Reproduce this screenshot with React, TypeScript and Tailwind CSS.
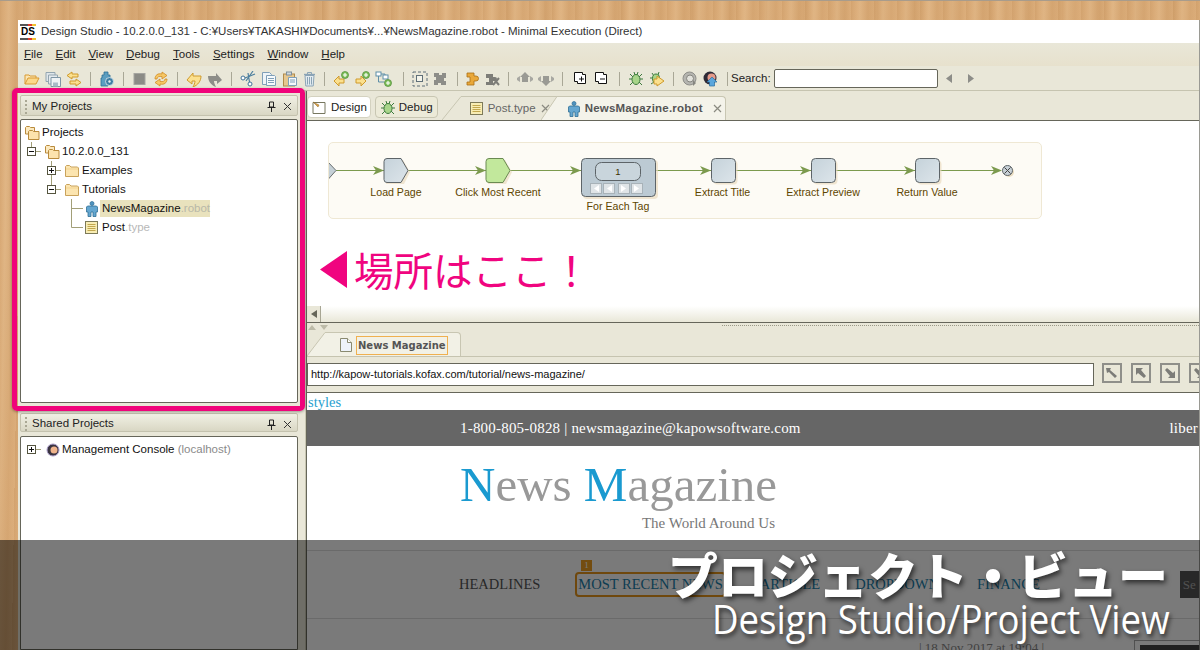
import type { ReactNode } from 'react'

// ── Toolbar + tree icons, all on a 16x16 grid ──
const Ico = ({ children, w = 16 }: { children: ReactNode; w?: number }) => (
  <svg width={w} height="16" viewBox={`0 0 ${w} 16`} className="shrink-0 block">
    {children}
  </svg>
)

const Plus = () => (
  <g>
    <circle cx="12" cy="4" r="3.5" fill="#7fbf5a" stroke="#4c8a36" strokeWidth=".7" />
    <path d="M12 2v4M10 4h4" stroke="#fff" strokeWidth="1.1" />
  </g>
)

const FolderOpen = () => (
  <Ico>
    <path d="M1 13V4h4l1 1h6v2" fill="#fbe6b4" stroke="#d99a32" />
    <path d="M1 13l3-6h11l-3 6z" fill="#fcd98a" stroke="#d99a32" />
  </Ico>
)
const SaveAll = () => (
  <Ico>
    <path d="M1 1.5h9v9H1z" fill="#dfe6ea" stroke="#93a5b0" />
    <path d="M3.5 4h9v9h-9z" fill="#e4eaee" stroke="#93a5b0" />
    <path d="M6 6.5h9.5v9H6z" fill="#eef2f4" stroke="#7f96a5" />
    <path d="M8 11.5h5v4H8z" fill="#a8bac6" />
  </Ico>
)
const Swap = () => (
  <Ico>
    <path d="M6 1L1 4.5 6 8V6h6V3H6z" fill="#fbe08e" stroke="#cf9a2c" />
    <path d="M10 8l5 3.5-5 3.5v-2H4v-3h6z" fill="#fbe08e" stroke="#cf9a2c" />
  </Ico>
)
const RobotGear = () => (
  <Ico>
    <path d="M5 1h4v3h2v3H9v8H2V7h1V4h2z" fill="#5b9dc0" stroke="#2f6f96" strokeWidth=".8" />
    <circle cx="10.5" cy="10.5" r="4" fill="#3f7ea3" stroke="#dfeaf0" strokeWidth=".8" />
    <circle cx="10.5" cy="10.5" r="1.2" fill="#e8f0f4" />
  </Ico>
)
const Stop = () => (
  <Ico>
    <rect x="2" y="2.5" width="11" height="11" fill="#8b8b86" stroke="#a5a5a0" />
  </Ico>
)
const Refresh = () => (
  <Ico>
    <path d="M2 8c0-4 3-6 7-5V1l5 3.5L9 8V5.5C6 5 4 6 4 8z" fill="#f6c765" stroke="#d08a24" strokeWidth=".8" />
    <path d="M14 8c0 4-3 6-7 5v2L2 11.5 7 8v2.5c3 .5 5-.5 5-2.5z" fill="#f6c765" stroke="#d08a24" strokeWidth=".8" />
  </Ico>
)
const Undo = () => (
  <Ico>
    <path d="M1 9l6-7v3h8c0 5-3 9-8 11 1-2 2-4 2-6H6v3z" fill="#fbe08e" stroke="#cf9a2c" />
  </Ico>
)
const Redo = () => (
  <Ico>
    <path d="M15 9L9 2v3H1c0 5 3 9 8 11-1-2-2-4-2-6h3v3z" fill="#8d8d88" />
  </Ico>
)
const Scissors = () => (
  <Ico>
    <path d="M13 0L6 10M8 2l2 12" stroke="#4d7f9e" strokeWidth="1.2" fill="none" />
    <path d="M15 3L5 7" stroke="#4d7f9e" strokeWidth="1.2" />
    <circle cx="3" cy="7" r="2" fill="#fff" stroke="#3f7299" />
    <circle cx="10" cy="13" r="2" fill="#fff" stroke="#3f7299" />
  </Ico>
)
const Copy = () => (
  <Ico>
    <path d="M1.5 1.5h7l2 2v10h-9z" fill="#eef4f8" stroke="#7f9fb8" />
    <path d="M5.5 4.5h8l1 1v9h-9z" fill="#f6fafc" stroke="#7f9fb8" />
    <path d="M7 7.5h6M7 9.5h6M7 11.5h6" stroke="#7f9fb8" />
  </Ico>
)
const Paste = () => (
  <Ico>
    <rect x="1.5" y="3" width="11" height="12" fill="#e6c78e" stroke="#b08a4a" />
    <rect x="4.5" y="1" width="5" height="3" fill="#cfd8de" stroke="#7f8f9a" />
    <path d="M6.5 6.5h8v8h-8z" fill="#f4f8fb" stroke="#7f9fb8" />
    <path d="M8 9h5M8 11h5" stroke="#7f9fb8" />
  </Ico>
)
const Trash = () => (
  <Ico w={13}>
    <path d="M1 3.5h11" stroke="#8ba4b6" strokeWidth="1.4" />
    <path d="M4.5 3V1.5h4V3" stroke="#8ba4b6" fill="none" />
    <path d="M2 4.5h9l-.8 10.5H2.8z" fill="#e3ebf0" stroke="#8ba4b6" />
    <path d="M4.5 6v7.5M6.5 6v7.5M8.5 6v7.5" stroke="#8ba4b6" />
  </Ico>
)
const ArrowLeftPlus = () => (
  <Ico>
    <path d="M1 10l5-5v3h5v4H6v3z" fill="#fbe08e" stroke="#cf9a2c" />
    <Plus />
  </Ico>
)
const ArrowRightPlus = () => (
  <Ico>
    <path d="M12 10L7 5v3H2v4h5v3z" fill="#fbe08e" stroke="#cf9a2c" />
    <Plus />
  </Ico>
)
const NodesPlus = () => (
  <Ico w={20}>
    <rect x="1" y="1" width="5" height="4" fill="#fff" stroke="#5f8fa8" />
    <rect x="8" y="4" width="5" height="4" fill="#fff" stroke="#5f8fa8" />
    <path d="M3.5 5v6h6M6 3h4v1" stroke="#5f8fa8" fill="none" />
    <circle cx="13" cy="12" r="3.5" fill="#7fbf5a" stroke="#4c8a36" strokeWidth=".7" />
    <path d="M13 10v4M11 12h4" stroke="#fff" strokeWidth="1.1" />
  </Ico>
)
const Frame = () => (
  <Ico>
    <path d="M1 1h14v14H1z" fill="none" stroke="#5f6f78" strokeDasharray="3 2" />
    <rect x="4.5" y="4.5" width="6" height="6" fill="#f4f4ea" stroke="#5f6f78" />
  </Ico>
)
const GreyPuzzle = () => (
  <Ico>
    <path d="M1 2h5v2h3V2h4v5h-2v3h2v4H8v-2H5v2H1v-5h2V6H1z" fill="#8d8d88" />
  </Ico>
)
const OrangePuzzle = () => (
  <Ico w={14}>
    <path d="M1 2h7v3h2a2.5 2.5 0 1 1 0 5H8v4H1v-3h3V6H1z" fill="#e9a83a" stroke="#a96e14" strokeWidth=".8" />
  </Ico>
)
const GreyPuzzleX = () => (
  <Ico w={15}>
    <path d="M1 3h7v3h2a2 2 0 1 1 0 4H8v4H1v-3h3V7H1z" fill="#7d7d78" />
    <path d="M8 7l6 7M14 7l-6 7" stroke="#7d7d78" strokeWidth="2" />
  </Ico>
)
const GreyUp = () => (
  <Ico>
    <path d="M8 1l5 5h-2v5H5V6H3z" fill="#9a9a94" />
    <path d="M0 7l3-2v6L0 9zM16 7l-3-2v6l3-2z" fill="#a8a8a2" />
  </Ico>
)
const GreyDown = () => (
  <Ico>
    <path d="M8 15l5-5h-2V5H5v5H3z" fill="#9a9a94" />
    <path d="M0 7l3-2v6L0 9zM16 7l-3-2v6l3-2z" fill="#a8a8a2" />
  </Ico>
)
const SquarePlus = () => (
  <Ico w={19}>
    <g transform="translate(3 0)">
      <path d="M.5 1.5h8v2h3v9h-8v-2h-3z" fill="#fff" stroke="#111" />
      <path d="M7.5 5.5v5M5 8h5" stroke="#111" />
    </g>
  </Ico>
)
const SquareMinus = () => (
  <Ico>
    <path d="M.5 1.5h8v2h3v9h-8v-2h-3z" fill="#fff" stroke="#111" />
    <path d="M5 8h5" stroke="#111" />
  </Ico>
)
const Bug = () => (
  <Ico>
    <path d="M2 3l3 3M14 3l-3 3M1 8h3M15 8h-3M2 14l3-3M14 14l-3-3M6 1l1 3M10 1L9 4" stroke="#3c7a3c" />
    <ellipse cx="8" cy="8.5" rx="4" ry="5" fill="#a8d58a" stroke="#3c7a3c" />
  </Ico>
)
const BugArrow = () => (
  <Ico>
    <path d="M3 2l2 3M10 1L9 4M1 7h3M2 13l3-2" stroke="#3c7a3c" />
    <ellipse cx="7" cy="7.5" rx="3.5" ry="4.5" fill="#a8d58a" stroke="#3c7a3c" />
    <path d="M8 5l7 5-7 5v-2H5V8h3z" fill="#fbe08e" stroke="#cf9a2c" />
  </Ico>
)
const GreyGlobe = () => (
  <Ico>
    <circle cx="7.5" cy="7.5" r="6.5" fill="#b5b5b0" stroke="#8d8d88" />
    <circle cx="8" cy="7.5" r="3.5" fill="#e2e2dc" stroke="#85857f" />
    <path d="M11 9l3 3-3 3z" fill="#85857f" />
  </Ico>
)
const Console = () => (
  <Ico>
    <circle cx="7" cy="7" r="6.5" fill="#2e2a36" />
    <circle cx="8.5" cy="6.5" r="4" fill="#e59a8a" />
    <path d="M9 6l5 5h-2.5v4h-5v-4H4z" fill="#5aa6dc" stroke="#2c6f9f" strokeWidth=".7" />
  </Ico>
)

const TOOLS: (ReactNode | null)[] = [
  <FolderOpen />, <SaveAll />, <Swap />, null,
  <RobotGear />, null,
  <Stop />, <Refresh />, null,
  <Undo />, <Redo />, null,
  <Scissors />, <Copy />, <Paste />, <Trash />, null,
  <ArrowLeftPlus />, <ArrowRightPlus />, <NodesPlus />, null,
  <Frame />, <GreyPuzzle />, null,
  <OrangePuzzle />, <GreyPuzzleX />, null,
  <GreyUp />, <GreyDown />, null,
  <SquarePlus />, <SquareMinus />, null,
  <Bug />, <BugArrow />, null,
  <GreyGlobe />, <Console />, null,
]

const Sep = () => <span className="mx-[3px] h-[14px] w-[1px] shrink-0 bg-[#a9a796]" />

const FolderIcon = () => (
  <Ico>
    <path d="M1.5 13.5v-10l1-1h3L7 4h6.5l1 1v8.5z" fill="#fce5b0" stroke="#c9a25a" />
    <path d="M2 6h12" stroke="#f3d38f" />
  </Ico>
)
const FoldersIcon = () => (
  <Ico>
    <path d="M1.5 9V2.5l1-1h3l1 1h4V9z" fill="#fce9bf" stroke="#b98b3c" />
    <path d="M4.5 14.5v-8l1-1h3l1 1H15v8z" fill="#fce3ad" stroke="#b98b3c" />
  </Ico>
)
const PersonIcon = () => (
  <svg width="14" height="16" viewBox="0 0 14 16" className="shrink-0 block">
    <circle cx="7" cy="2.5" r="2" fill="#4f93bf" stroke="#2f6f96" strokeWidth=".7" />
    <path d="M2.5 5h9l1 1v5H11v4.5H8V11H6v4.5H3V11H1.5V6z" fill="#64a6d0" stroke="#2f6f96" strokeWidth=".8" />
  </svg>
)
const NoteIcon = () => (
  <Ico w={13}>
    <rect x=".5" y="1.5" width="12" height="12" fill="#f8edb4" stroke="#7d7a58" />
    <path d="M2.5 4.5h8M2.5 6.5h8M2.5 8.5h8M2.5 10.5h8" stroke="#c2a74e" />
  </Ico>
)
const PageIcon = () => (
  <Ico w={12}>
    <path d="M.5 1.5h7l4 4v9h-11z" fill="#eef3fa" stroke="#8a8a70" />
    <path d="M7.5 1.5v4h4" fill="#fff" stroke="#8a8a70" />
  </Ico>
)
const PinClose = () => (
  <div className="ml-auto flex items-center gap-[7px] pr-[5px]">
    <svg width="9" height="11" viewBox="0 0 9 11">
      <path d="M2.5 1h4v5h-4zM.5 6.5h8M4.5 7v4" fill="none" stroke="#222" />
    </svg>
    <svg width="9" height="9" viewBox="0 0 9 9">
      <path d="M1 1l7 7M8 1L1 8" stroke="#333" />
    </svg>
  </div>
)
const TabClose = () => (
  <svg width="9" height="9" viewBox="0 0 9 9" className="shrink-0">
    <path d="M1 1l7 7M8 1L1 8" stroke="#8a8a80" strokeWidth="1.2" />
  </svg>
)

const PanelHeader = ({ title, className }: { title: string; className: string }) => (
  <div
    className={`flex items-center rounded-[2px] border border-[#c4c2ae] bg-gradient-to-b from-[#f1f0e4] to-[#d9d7c4] pl-[4px] ${className}`}
  >
    <span className="mr-[5px] h-[14px] w-[2px] border-l-2 border-dotted border-[#aaa894]" />
    <span className="text-[#222]">{title}</span>
    <PinClose />
  </div>
)

// tree guide lines are drawn per row; w is the indent up to the icon
const Guide = ({ w, d, box }: { w: number; d: string; box?: { x: number; plus: boolean } }) => (
  <svg width={w} height="19" viewBox={`0 0 ${w} 19`} className="shrink-0 block">
    <path d={d} stroke="#a29f78" fill="none" />
    {box && (
      <g>
        <rect x={box.x + 0.5} y="5.5" width="8" height="8" fill="#fff" stroke="#55553f" />
        <path
          d={
            box.plus
              ? `M${box.x + 2} 9.5h5M${box.x + 4.5} 7v5`
              : `M${box.x + 2} 9.5h5`
          }
          stroke="#111"
        />
      </g>
    )}
  </svg>
)

const Row = ({ children }: { children: ReactNode }) => (
  <div className="flex h-[19px] items-center whitespace-nowrap text-[#111]">{children}</div>
)

const Diagram = () => (
  <svg viewBox="329 143 712 75" preserveAspectRatio="none" className="block h-full w-full">
    <defs>
      <linearGradient id="node" x1="0" y1="0" x2="1" y2="1">
        <stop offset="0" stopColor="#c5d2da" />
        <stop offset="1" stopColor="#dde5ea" />
      </linearGradient>
    </defs>
    <path d="M336 170.5H1001" stroke="#7c9a4e" strokeWidth="1.2" />
    {[373, 475, 570, 700, 800, 904, 991].map((x) => (
      <path key={x} d={`M${x} 166l11 4.5-11 4.5 3-4.5z`} fill="#7c9a4e" />
    ))}
    <path d="M328 162l8 8.5-8 9z" fill="#c5d0d6" stroke="#6a6f70" />
    {/* pentagons */}
    <path d="M386 160h17l7 12-6 12h-18z" fill="#e9dcc0" opacity=".7" />
    <path d="M387 158.5h14l7 12-7 12h-14q-3 0-3-3v-18q0-3 3-3z" fill="url(#node)" stroke="#5d6468" />
    <path d="M488 160h17l7 12-6 12h-18z" fill="#e9dcc0" opacity=".7" />
    <path d="M489 158.5h14l7 12-7 12h-14q-3 0-3-3v-18q0-3 3-3z" fill="#c2e89c" stroke="#6b8a52" />
    {/* loop step */}
    <rect x="583" y="160" width="75" height="39" rx="4" fill="#e9dcc0" opacity=".7" />
    <rect x="581.5" y="158.5" width="74" height="38" rx="4" fill="#bccad3" stroke="#5d6468" />
    <rect x="595.5" y="162.5" width="45" height="18" rx="6" fill="#c9d5dc" stroke="#5d6468" />
    <text x="618" y="175" textAnchor="middle" fontSize="9.5" fill="#3d3000">1</text>
    {[591, 604, 619, 632].map((x, i) => (
      <g key={x}>
        <rect x={x - 0.5} y="183.5" width="11" height="10" fill="#dfe4e7" stroke="#a8b2b8" />
        <path
          d={
            i < 2
              ? `M${x + 8} 185v7l-5-3.5z`
              : `M${x + 2} 185v7l5-3.5z`
          }
          fill="#fff"
        />
      </g>
    ))}
    {/* square steps */}
    {[711.5, 811.5, 915.5].map((x) => (
      <g key={x}>
        <rect x={x + 2} y="160.5" width="24" height="24" rx="4" fill="#e9dcc0" opacity=".7" />
        <rect x={x} y="158.5" width="24" height="24" rx="4" fill="url(#node)" stroke="#5d6468" />
      </g>
    ))}
    <circle cx="1009" cy="172" r="5" fill="#e9dcc0" />
    <circle cx="1007.5" cy="170.5" r="5" fill="#c7d0d6" stroke="#5d6468" />
    <path d="M1004.5 167.5l6 6M1010.5 167.5l-6 6" stroke="#444" />
    <g fontSize="10.6" fill="#5e4500" textAnchor="middle">
      <text x="396" y="196">Load Page</text>
      <text x="498" y="196">Click Most Recent</text>
      <text x="618" y="210">For Each Tag</text>
      <text x="722.5" y="196">Extract Title</text>
      <text x="823" y="196">Extract Preview</text>
      <text x="927" y="196">Return Value</text>
    </g>
  </svg>
)

const NavButton = ({ d }: { d: string }) => (
  <span className="flex h-[20px] w-[20px] shrink-0 items-center justify-center border-2 border-[#8f8f8a]">
    <svg width="14" height="14" viewBox="0 0 14 14">
      <path d={d} fill="#7c7c78" />
    </svg>
  </span>
)

export default function App() {
  return (
    <div className="relative flex h-[650px] w-[1200px] flex-col overflow-hidden border-t border-[#a89c8c] bg-[#dcae7b] bg-[repeating-linear-gradient(91deg,rgba(150,90,30,0.12)_0px,rgba(150,90,30,0)_5px,rgba(255,235,200,0.12)_9px,rgba(150,90,30,0.08)_17px,rgba(150,90,30,0)_23px),repeating-linear-gradient(89deg,rgba(140,80,20,0.08)_0px,rgba(140,80,20,0)_13px,rgba(140,80,20,0.05)_37px)] pl-[18px] pt-[19px] font-['Liberation_Sans',sans-serif] text-[11.5px]">
      <div className="flex min-h-0 flex-1 flex-col border-r border-[#9a9a94] bg-[#e9e7d8]">
        {/* Title bar */}
        <div className="flex h-[23px] shrink-0 items-center gap-[5px] bg-white pl-[2px] text-[11.5px] text-[#333]">
          <span className="flex h-[16px] w-[16px] flex-col justify-between bg-white">
            <span className="h-[2px] w-full bg-[linear-gradient(90deg,#555_50%,#e0392b_50%,#e0392b_75%,#f1c232_75%)]" />
            <span className="text-center text-[10px] font-bold leading-[10px] text-black">DS</span>
            <span className="h-[2px] w-full bg-[linear-gradient(90deg,#555_50%,#e0392b_50%,#e0392b_75%,#f1c232_75%)]" />
          </span>
          <span className="whitespace-nowrap">
            Design Studio - 10.2.0.0_131 - C:¥Users¥TAKASHI¥Documents¥...¥NewsMagazine.robot - Minimal Execution (Direct)
          </span>
        </div>

        {/* Menu */}
        <div className="flex h-[23px] shrink-0 items-center gap-[13px] bg-gradient-to-b from-[#e9e7d8] to-[#e7e1cd] pl-[6px] text-[#222]">
          {['File', 'Edit', 'View', 'Debug', 'Tools', 'Settings', 'Window', 'Help'].map((m) => (
            <span key={m}>
              <span className="underline">{m[0]}</span>
              {m.slice(1)}
            </span>
          ))}
        </div>

        {/* Toolbar */}
        <div className="flex h-[25px] shrink-0 items-center gap-[5px] border-b border-[#c6c4b0] pl-[6px] pt-[1px]">
          {TOOLS.map((t, i) => (t ? <span key={i}>{t}</span> : <Sep key={i} />))}
          <span className="-ml-[5px] text-[#222]">Search:</span>
          <span className="-ml-[2px] h-[19px] w-[164px] rounded-[2px] border border-[#66665a] bg-white" />
          <svg width="30" height="9" viewBox="0 0 30 9" className="ml-[3px]">
            <path d="M6 0v9L0 4.5zM22 0v9l6-4.5z" fill="#8d8d88" />
          </svg>
        </div>

        <div className="flex min-h-0 flex-1">
          {/* Left column: project views */}
          <div className="flex w-[288px] shrink-0 flex-col border-r border-[#c8c6b2] pl-[2px] pr-[7px] pt-[4px]">
            <PanelHeader title="My Projects" className="h-[21px] shrink-0 pt-[2px]" />
            <div className="mt-[3px] h-[284px] shrink-0 rounded-[2px] border border-[#66665a] bg-white pt-[3px]">
              <Row>
                <span className="w-[3px]" />
                <FoldersIcon />
                <span className="ml-[2px]">Projects</span>
              </Row>
              <Row>
                <Guide w={23} d="M10.5 0v5M14 9.5h6" box={{ x: 6, plus: false }} />
                <FoldersIcon />
                <span className="ml-[2px]">10.2.0.0_131</span>
              </Row>
              <Row>
                <Guide w={43} d="M30.5 0v5M30.5 14v5M34 9.5h6" box={{ x: 26, plus: true }} />
                <FolderIcon />
                <span className="ml-[2px]">Examples</span>
              </Row>
              <Row>
                <Guide w={43} d="M30.5 0v5M34 9.5h6" box={{ x: 26, plus: false }} />
                <FolderIcon />
                <span className="ml-[2px]">Tutorials</span>
              </Row>
              <Row>
                <Guide w={64} d="M50.5 0v19M50.5 9.5H62" />
                <PersonIcon />
                <span className="ml-[1px] bg-[#e9e2bd] pl-[2px] leading-[17px]">
                  NewsMagazine<span className="text-[#b8b8a8]">.robot</span>
                </span>
              </Row>
              <Row>
                <Guide w={64} d="M50.5 0v9.5H62" />
                <NoteIcon />
                <span className="ml-[4px]">
                  Post<span className="text-[#b8b8b8]">.type</span>
                </span>
              </Row>
            </div>
            <PanelHeader title="Shared Projects" className="mt-[10px] h-[19px] shrink-0 pt-[3px]" />
            <div className="mt-[4px] min-h-0 flex-1 rounded-t-[2px] border border-[#66665a] bg-white pt-[3px]">
              <Row>
                <Guide w={25} d="M14 9.5h6" box={{ x: 6, plus: true }} />
                <svg width="14" height="14" viewBox="0 0 14 14" className="shrink-0">
                  <circle cx="7" cy="7" r="6" fill="#3a3440" stroke="#a99cc8" />
                  <circle cx="8" cy="7" r="3.5" fill="#f0b48c" />
                </svg>
                <span className="ml-[2px]">
                  Management Console <span className="text-[#8a8a8a]">(localhost)</span>
                </span>
              </Row>
            </div>
          </div>

          {/* Right column: editor + browser */}
          <div className="flex min-w-0 flex-1 flex-col overflow-hidden border-l border-[#66665a]">
            {/* Editor tabs */}
            <div className="flex h-[30px] shrink-0 items-end border-b border-[#66665a]">
              <div className="mb-[2px] flex h-[22px] items-center gap-[4px] rounded-[4px] border border-[#d4d2c0] bg-white px-[3px] pt-[1px] text-[#222]">
                <svg width="16" height="16" viewBox="0 0 16 16">
                  <path d="M2 2.5h12v11H2z" fill="#fff" stroke="#77775f" />
                  <path d="M2 2l5 5 1-2z" fill="#e0a040" stroke="#8a6a30" strokeWidth=".5" />
                </svg>
                Design
              </div>
              <div className="mb-[2px] ml-[4px] flex h-[22px] items-center gap-[3px] rounded-[4px] border border-[#c8c6b2] bg-[#ecead8] px-[4px] pt-[1px] text-[#222]">
                <Bug />
                Debug
              </div>
              <svg width="20" height="24" viewBox="0 0 20 24" className="ml-[4px] shrink-0">
                <path d="M0 24L19 .5h1" fill="none" stroke="#c8c6b2" />
              </svg>
              <div className="flex h-[24px] w-[95px] shrink-0 items-center gap-[5px] border-t border-[#c8c6b2] pl-[8px] text-[#666]">
                <NoteIcon />
                <span>Post.type</span>
                <TabClose />
              </div>
              <svg width="16" height="24" viewBox="0 0 16 24" className="-ml-[16px] shrink-0">
                <path d="M0 24L16 .5V24z" fill="#f4f3ea" />
                <path d="M0 24L16 .5" fill="none" stroke="#c8c6b2" />
              </svg>
              <div className="flex h-[24px] w-[169px] shrink-0 items-center gap-[4px] rounded-tr-[4px] border-r border-t border-[#c8c6b2] bg-[#f4f3ea] pl-[10px] font-bold text-[#555]">
                <PersonIcon />
                <span className="mr-[6px] whitespace-nowrap tracking-[0.2px]">NewsMagazine.robot</span>
                <TabClose />
              </div>
            </div>

            {/* Robot editor */}
            <div className="relative h-[185px] shrink-0 bg-white pl-[21px] pt-[21px]">
              <div className="h-[77px] w-[714px] rounded-[5px] border border-[#efe8d4] bg-[#fdfbf5]">
                <Diagram />
              </div>
              <div className="absolute left-[13px] top-[126px] flex items-center font-['Noto_Sans_CJK_JP',sans-serif] text-[39.5px] leading-[44px] text-[#f0047f]">
                <svg width="27" height="37" viewBox="0 0 27 37" className="mr-[7px]">
                  <path d="M0 18.5L27 0v37z" fill="#f0047f" />
                </svg>
                場所はここ！
              </div>
            </div>

            {/* Horizontal scrollbar */}
            <div className="flex h-[17px] shrink-0 border-b border-[#66665a] bg-gradient-to-b from-white to-[#e9e7d8]">
              <span className="flex w-[14px] items-center justify-center border-r border-[#a8a694] bg-[#e9e7d8]">
                <svg width="6" height="8" viewBox="0 0 6 8">
                  <path d="M6 0v8L0 4z" fill="#66665a" />
                </svg>
              </span>
            </div>

            {/* Split handle */}
            <div className="flex h-[9px] shrink-0 items-center justify-between pl-[1px]">
              <svg width="22" height="6" viewBox="0 0 22 6">
                <path d="M0 5l4-5 4 5zM12 0l4 5 4-5z" fill="#bdbba8" />
              </svg>
              <span className="mb-[4px] h-[1px] w-[477px] border-t border-dotted border-[#9c9a88]" />
            </div>

            {/* Browser tab */}
            <div className="flex h-[25px] shrink-0 items-end border-b border-[#c6c4b0]">
              <svg width="18" height="24" viewBox="0 0 18 24" className="shrink-0">
                <path d="M0 24L18 .5V24z" fill="#f2f1e6" />
                <path d="M0 24L18 .5" fill="none" stroke="#c8c6b2" />
              </svg>
              <div className="flex h-[24px] w-[136px] shrink-0 items-center rounded-tr-[4px] border-r border-t border-[#c8c6b2] bg-[#f2f1e6] pl-[15px] pt-[1px]">
                <PageIcon />
                <span className="ml-[4px] border border-[#efb050] px-[1px] font-['DejaVu_Sans',sans-serif] text-[10px] font-bold leading-[17px] text-[#555]">
                  News Magazine
                </span>
              </div>
            </div>

            {/* Address row */}
            <div className="flex h-[36px] shrink-0 items-start gap-[9px] border-b border-[#66665a] pt-[6px]">
              <span className="flex h-[23px] w-[787px] shrink-0 items-center border border-[#66665a] bg-white pl-[3px] text-[11px] text-[#111]">
                http://kapow-tutorials.kofax.com/tutorial/news-magazine/
              </span>
              <span className="-ml-[1px]">
                <NavButton d="M1 2l5 0-1 2 7 6-2 2-6-6-2 1z" />
              </span>
              <NavButton d="M2 2h7L7 4l5 6-2 2-6-5-2 2z" />
              <NavButton d="M12 12H5l2-2-5-6 2-2 6 5 2-2z" />
              <NavButton d="M12 12H5l2-2-5-6 2-2 6 5 2-2z" />
            </div>

            {/* Page in the browser */}
            <div className="min-h-0 flex-1 bg-white font-['Liberation_Serif',serif]">
              <div className="h-[17px] pl-[1px] pt-[1px] text-[14.5px] leading-[16px] text-[#2a9fd0]">styles</div>
              <div className="flex h-[36px] items-center justify-between whitespace-nowrap bg-[#666] pl-[153px] text-[15px] tracking-[0.2px] text-white">
                <span>1-800-805-0828 | newsmagazine@kapowsoftware.com</span>
                <span className="pr-[1px]">liber</span>
              </div>
              <div className="h-[104px] w-[468px] pl-[153px] pt-[10px]">
                <div className="whitespace-nowrap text-[49px] leading-[58px] text-[#999]">
                  <span className="text-[#1a9ad0]">N</span>ews <span className="text-[#1a9ad0]">M</span>agazine
                </div>
                <div className="mt-[1px] text-right text-[15px] leading-[16px] text-[#777]">The World Around Us</div>
              </div>
              <div className="flex h-[69px] items-center whitespace-nowrap border-y border-[#ddd] pl-[152px] text-[14.5px] text-[#555]">
                <span>HEADLINES</span>
                <span className="relative ml-[35px] rounded-[4px] border-2 border-[#e8961c] px-[1px] text-[#1a80aa]">
                  MOST RECENT NEWS
                  <span className="absolute -top-[14px] left-[4px] h-[11px] bg-[#f0a020] px-[3px] text-[9px] leading-[11px] text-white">1</span>
                </span>
                <span className="ml-[34px] text-[#1a80aa]">ARTICLE</span>
                <span className="ml-[35px] text-[#1a80aa]">DROPDOWN</span>
                <span className="ml-[38px] text-[#1a80aa]">FINANCE</span>
                <span className="ml-[140px] h-[27px] flex-1 bg-[#555] pl-[3px] text-[13px] leading-[27px] text-[#aaa]">Se</span>
              </div>
              <div className="flex items-start pl-[612px] pt-[21px] text-[13px] leading-[16px] text-[#888]">
                <span className="whitespace-nowrap">| 18 Nov 2017 at 19:04 |</span>
                <div className="ml-[90px] h-[20px] flex-1 border-l border-t border-[#aaa] pl-[5px] pt-[4px]">
                  <div className="h-[20px] bg-[#444]" />
                </div>
              </div>
            </div>
          </div>
        </div>
      </div>

      {/* Pink call-out around the My Projects view */}
      <div className="pointer-events-none absolute left-[12px] top-[87px] h-[323px] w-[293px] rounded-[5px] border-[5px] border-[#f0047a] shadow-[0_1px_3px_rgba(0,0,0,0.35)]" />

      {/* Caption strip */}
      <div className="absolute inset-x-0 bottom-0 flex h-[110px] flex-col items-end bg-black/[0.52] pr-[30px] text-white">
        <div className="mr-[2px] mt-[3px] whitespace-nowrap font-['Noto_Sans_CJK_JP',sans-serif] text-[50px] font-black leading-[60px] [text-shadow:2px_3px_5px_rgba(0,0,0,0.6)]">
          プロジェクト・ビュー
        </div>
        <div className="-mt-[6px] origin-right scale-x-[0.916] whitespace-nowrap font-['Open_Sans',sans-serif] text-[40px] font-medium leading-[44px] [text-shadow:2px_3px_5px_rgba(0,0,0,0.6)]">
          Design Studio/Project View
        </div>
      </div>
    </div>
  )
}
